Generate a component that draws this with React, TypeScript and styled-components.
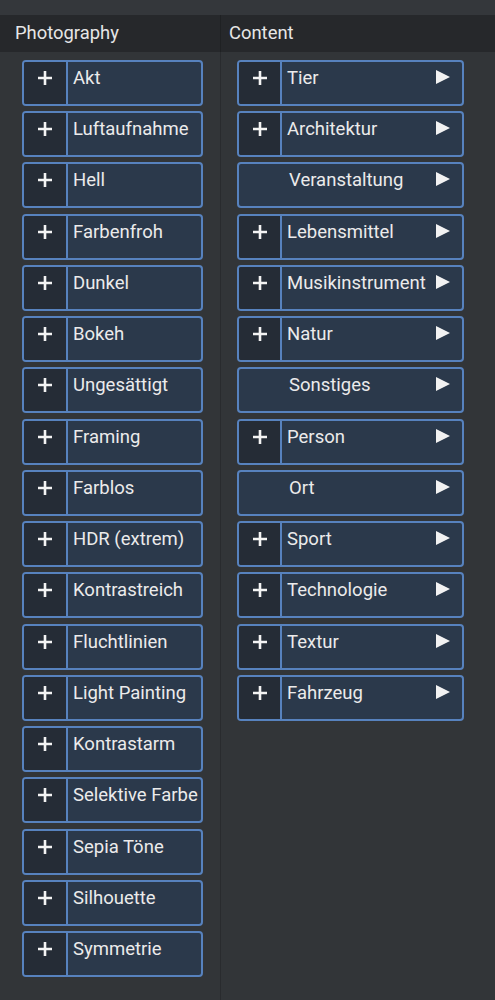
import React from "react";
import styled, { createGlobalStyle } from "styled-components";

const GlobalStyle = createGlobalStyle`
  html, body {
    margin: 0;
    padding: 0;
    background: #33363a;
  }
  body {
    font-family: Roboto, "Liberation Sans", sans-serif;
  }
`;

const photography = [
  "Akt",
  "Luftaufnahme",
  "Hell",
  "Farbenfroh",
  "Dunkel",
  "Bokeh",
  "Ungesättigt",
  "Framing",
  "Farblos",
  "HDR (extrem)",
  "Kontrastreich",
  "Fluchtlinien",
  "Light Painting",
  "Kontrastarm",
  "Selektive Farbe",
  "Sepia Töne",
  "Silhouette",
  "Symmetrie"
];

const content: { label: string; plus: boolean }[] = [
  { label: "Tier", plus: true },
  { label: "Architektur", plus: true },
  { label: "Veranstaltung", plus: false },
  { label: "Lebensmittel", plus: true },
  { label: "Musikinstrument", plus: true },
  { label: "Natur", plus: true },
  { label: "Sonstiges", plus: false },
  { label: "Person", plus: true },
  { label: "Ort", plus: false },
  { label: "Sport", plus: true },
  { label: "Technologie", plus: true },
  { label: "Textur", plus: true },
  { label: "Fahrzeug", plus: true }
];

const Page = styled.div`
  width: 495px;
  height: 1000px;
  padding-top: 15px;
  box-sizing: border-box;
  background: #34373b;
  display: grid;
  grid-template-columns: 221px 1fr;
  grid-template-rows: 37px 1fr;
  overflow: hidden;
`;

const Header = styled.div<{ $pad: number; $divider?: boolean }>`
  background: #26282b;
  color: #e6e6e6;
  font-size: 18.4px;
  display: flex;
  align-items: center;
  padding: 0 0 2px ${(p) => p.$pad}px;
  border-right: ${(p) => (p.$divider ? "1px solid #1f2123" : "none")};
`;

const Column = styled.div<{ $pad: number; $width: number; $divider?: boolean }>`
  background: #323538;
  padding: 8px 0 0 ${(p) => p.$pad}px;
  display: flex;
  flex-direction: column;
  gap: 5.24px;
  border-right: ${(p) => (p.$divider ? "1px solid #292b2e" : "none")};

  & > * {
    width: ${(p) => p.$width}px;
  }
`;

const Tag = styled.div`
  height: 46px;
  box-sizing: border-box;
  border: 2px solid #5782be;
  border-radius: 4px;
  background: #2b394b;
  display: flex;
  overflow: hidden;
  color: #ebebeb;
  font-size: 18.5px;
`;

const PlusCell = styled.div<{ $width: number; $hidden?: boolean }>`
  width: ${(p) => p.$width}px;
  flex: none;
  background: ${(p) => (p.$hidden ? "transparent" : "#252c36")};
  border-right: 2px solid ${(p) => (p.$hidden ? "transparent" : "#5782be")};
  display: flex;
  justify-content: center;
  padding-top: 8px;
  box-sizing: border-box;
`;

const Label = styled.div`
  flex: 1;
  padding: 5px 0 0 5px;
  white-space: nowrap;
  display: flex;
  align-items: flex-start;
  justify-content: space-between;
`;

const Arrow = styled.span`
  width: 0;
  height: 0;
  margin: 3px 12px 0 0;
  border-top: 7px solid transparent;
  border-bottom: 7px solid transparent;
  border-left: 14px solid #f2f2f2;
`;

const Plus = () => (
  <svg width="16" height="16" viewBox="0 0 16 16">
    <path d="M8 1v14M1 8h14" stroke="#f4f4f4" strokeWidth="2.6" />
  </svg>
);

export default function App() {
  return (
    <>
      <GlobalStyle />
      <Page>
        <Header $pad={15} $divider>
          Photography
        </Header>
        <Header $pad={8}>Content</Header>
        <Column $pad={22} $width={181} $divider>
          {photography.map((name) => (
            <Tag key={name}>
              <PlusCell $width={44}>
                <Plus />
              </PlusCell>
              <Label>{name}</Label>
            </Tag>
          ))}
        </Column>
        <Column $pad={16} $width={227}>
          {content.map((item) => (
            <Tag key={item.label}>
              <PlusCell $width={43} $hidden={!item.plus}>
                {item.plus && <Plus />}
              </PlusCell>
              <Label>
                <span style={{ paddingLeft: item.plus ? 0 : 2 }}>{item.label}</span>
                <Arrow />
              </Label>
            </Tag>
          ))}
        </Column>
      </Page>
    </>
  );
}
